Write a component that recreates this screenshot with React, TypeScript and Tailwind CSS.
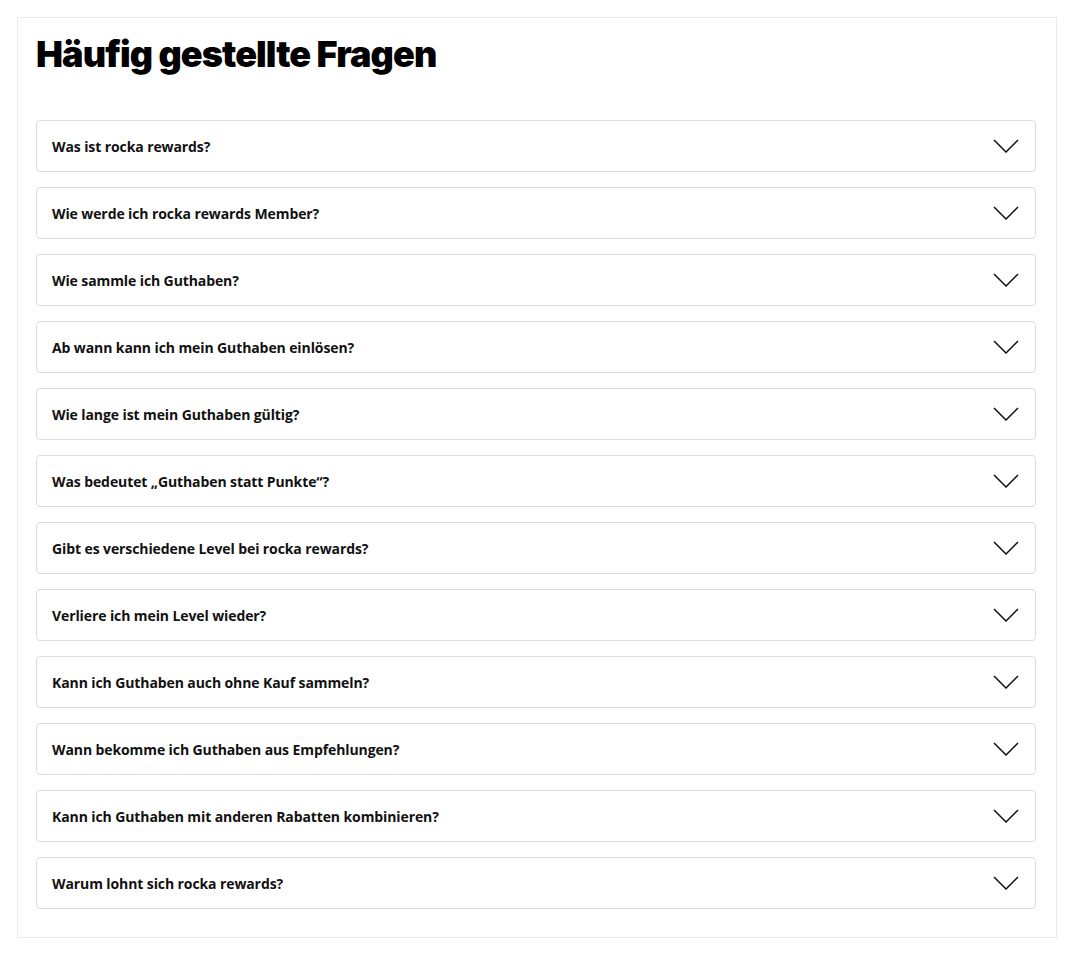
import React from "react";

const questions = [
  "Was ist rocka rewards?",
  "Wie werde ich rocka rewards Member?",
  "Wie sammle ich Guthaben?",
  "Ab wann kann ich mein Guthaben einlösen?",
  "Wie lange ist mein Guthaben gültig?",
  "Was bedeutet „Guthaben statt Punkte“?",
  "Gibt es verschiedene Level bei rocka rewards?",
  "Verliere ich mein Level wieder?",
  "Kann ich Guthaben auch ohne Kauf sammeln?",
  "Wann bekomme ich Guthaben aus Empfehlungen?",
  "Kann ich Guthaben mit anderen Rabatten kombinieren?",
  "Warum lohnt sich rocka rewards?",
];

const Chevron = () => (
  <svg width="26" height="14" viewBox="0 0 26 14" fill="none">
    <path d="M1 1 L13 13 L25 1" stroke="#111" strokeWidth="1.5" />
  </svg>
);

const App = () => {
  return (
    <div className="bg-white min-h-[955px] pt-[17px] pl-[17px]">
      <div className="w-[1040px] border border-[#ebebeb] pt-[12px] pb-[28px] pl-[18px] pr-[20px]">
        <h2 className="text-[36px] leading-[48px] font-black tracking-[-0.9px] text-black font-['Inter',sans-serif]">
          Häufig gestellte Fragen
        </h2>
        <div className="mt-[42px] flex flex-col gap-[15px]">
          {questions.map((q) => (
            <div
              key={q}
              className="h-[52px] border border-[#dcdcdc] rounded-[4px] flex items-center justify-between pl-[15px] pr-[16px] cursor-pointer"
            >
              <span className="text-[14px] font-bold text-[#111] tracking-[-0.1px] font-['Open_Sans',sans-serif]">
                {q}
              </span>
              <Chevron />
            </div>
          ))}
        </div>
      </div>
    </div>
  );
};

export default App;
